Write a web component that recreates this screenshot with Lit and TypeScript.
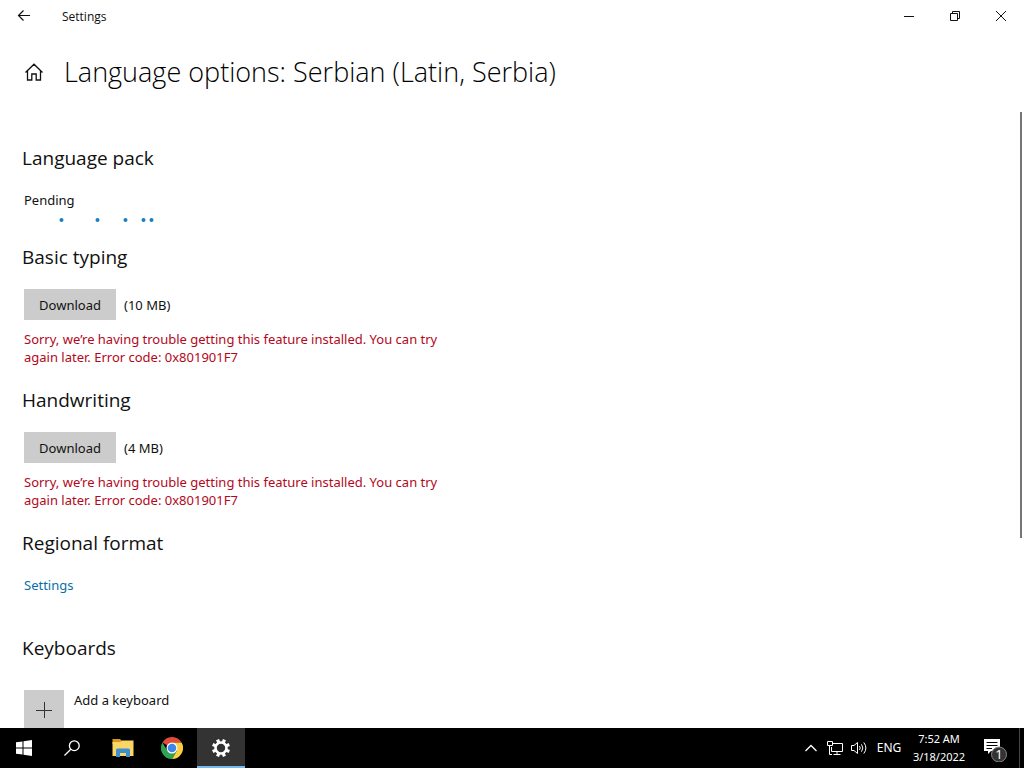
import { LitElement, html, css, svg } from "lit";
import { customElement, property } from "lit/decorators.js";

const PROGRESS_DOTS = [37, 73, 101, 119, 127];

@customElement("title-bar")
class TitleBar extends LitElement {
  static styles = css`
    :host { display: flex; align-items: center; height: 32px; flex: none; }
    button { display: grid; place-items: center; height: 32px; width: 46px; padding: 0; border: 0; background: none; color: #111; }
    .back { width: 48px; }
    .name { flex: 1; padding: 2px 0 0 14px; font: 12px/16px "Open Sans", sans-serif; }
    svg { display: block; fill: none; stroke: currentColor; }
  `;
  render() {
    return html`
      <button class="back" aria-label="Back">
        <svg width="16" height="16" viewBox="0 0 16 16" stroke-width="1.2"><path d="M14 7.500H2.500M7.500 2.500L2.500 7.500L7.500 12.500" /></svg>
      </button>
      <span class="name">Settings</span>
      <button aria-label="Minimize">
        <svg width="10" height="10" viewBox="0 0 10 10"><path d="M0 5.5H10" /></svg>
      </button>
      <button aria-label="Restore">
        <svg width="10" height="10" viewBox="0 0 10 10"><path d="M.5 2.5H7.5V9.5H.5ZM2.5 2.5V.5H9.5V7.5H7.5" /></svg>
      </button>
      <button aria-label="Close">
        <svg width="10" height="10" viewBox="0 0 10 10"><path d="M0 0L10 10M10 0L0 10" /></svg>
      </button>
    `;
  }
}

@customElement("feature-download")
class FeatureDownload extends LitElement {
  @property() name = "";
  @property() size = "";
  static styles = css`
    :host { display: block; }
    h2 { margin: 0 0 18px -2px; font: 400 19px/28px "Open Sans", sans-serif; }
    .row { display: flex; align-items: center; gap: 8px; }
    button { height: 31px; width: 92px; padding: 0; border: 0; background: #ccc; color: #111; font: inherit; }
    .error { margin: 10px 0 0; max-width: 430px; line-height: 18px; color: #b3081b; }
  `;
  render() {
    return html`
      <h2>${this.name}</h2>
      <div class="row"><button>Download</button><span>(${this.size})</span></div>
      <p class="error">Sorry, we’re having trouble getting this feature installed. You can try again later. Error code: 0x801901F7</p>
    `;
  }
}

@customElement("task-bar")
class TaskBar extends LitElement {
  static styles = css`
    :host { display: flex; height: 40px; flex: none; background: #000; color: #fff; font-size: 12px; }
    button { display: grid; place-items: center; height: 40px; padding: 0; border: 0; background: none; color: inherit; font: inherit; }
    .app { width: 48px; }
    .apps, .system, .pinned, .tray { display: flex; }
    .apps { flex: 1; gap: 3px; }
    .pinned { gap: 1px; }
    .active { background: #333; box-shadow: inset 0 -2px #76b9ed; }
    .icon { width: 24px; }
    .lang { width: 36px; }
    .clock { width: 64px; font-size: 11px; line-height: 18px; text-align: center; }
    .notes { width: 48px; }
    .desktop { width: 5px; border-left: 1px solid #444; }
    svg { display: block; }
    .count { font-size: 13px; }
  `;
  render() {
    return html`
      <div class="apps">
        <div class="system">
          <button class="app" aria-label="Start">
            <svg width="16" height="16" viewBox="0 0 16 16" fill="#fff"><path d="M0 2.3L6.5 1.4V7.5H0ZM7.5 1.2L16 0V7.5H7.5ZM0 8.5H6.5V14.6L0 13.7ZM7.5 8.5H16V16L7.5 14.8Z" /></svg>
          </button>
          <button class="app" aria-label="Search">
            <svg width="16" height="16" viewBox="0 0 16 16" fill="none" stroke="#fff" stroke-width="1.3"><circle cx="10.3" cy="5.7" r="4.9" /><path d="M6.8 9.2L.5 15.5" /></svg>
          </button>
        </div>
        <div class="pinned">
          <button class="app" aria-label="File Explorer">
            <svg width="22" height="18" viewBox="0 0 22 18">
              <path d="M.5 0H8L10 2H21V5H.5Z" fill="#d69b1d" />
              <path d="M.5 3H8.5L10 1.5H21.5V17H.5Z" fill="#fbd667" />
              <path d="M4 18V11Q4 9.5 5.500 9.500H16.500Q18 9.500 18 11V18H14V14H8V18Z" fill="#3c8fd0" />
            </svg>
          </button>
          <button class="app" aria-label="Chrome">
            <svg width="22" height="22" viewBox="0 0 22 22">
              <path d="M11 11L1.470 5.500A11 11 0 0 1 20.530 5.500H11Z" fill="#e24a3b" />
              <path d="M11 5.500H20.530A11 11 0 0 1 11 22L15.760 13.750Z" fill="#fbcf3f" />
              <path d="M1.470 5.500A11 11 0 0 0 11 22L15.760 13.750L6.240 13.750Z" fill="#2fa454" />
              <circle cx="11" cy="11" r="5.500" fill="#fff" /><circle cx="11" cy="11" r="4.300" fill="#4285e8" />
            </svg>
          </button>
          <button class="app active" aria-label="Settings">
            <svg width="18" height="18" viewBox="0 0 18 18" fill="none" stroke="#fff">
              <circle cx="9" cy="9" r="5.500" stroke-width="2.600" />
              ${[0, 45, 90, 135, 180, 225, 270, 315].map(
                (a) => svg`<path d="M9 0V3.500" stroke-width="3.200" transform="rotate(${a + 22.5} 9 9)" />`
              )}
            </svg>
          </button>
        </div>
      </div>
      <div class="tray">
        <button class="icon" aria-label="Show hidden icons">
          <svg width="12" height="8" viewBox="0 0 12 8" fill="none" stroke="#fff" stroke-width="1.300"><path d="M.5 7L6 1.500L11.500 7" /></svg>
        </button>
        <button class="icon" aria-label="Network">
          <svg width="16" height="14" viewBox="0 0 16 14" fill="none" stroke="#fff"><path d="M6 2.500H15.500V10.500H4.500V6M10 10.500V13M6.500 13.500H13.500M.5 .5H5.500V4.500H.5ZM2.500 4.500V13.500H5" /></svg>
        </button>
        <button class="icon" aria-label="Volume">
          <svg width="17" height="14" viewBox="0 0 17 14" fill="none" stroke="#fff"><path d="M.5 4.500H3L6.500 1.500V12.500L3 9.500H.5ZM8.500 5Q10 7 8.500 9M10.500 3.300Q13.200 7 10.500 10.700M12.800 1.500Q17 7 12.800 12.500" /></svg>
        </button>
        <button class="lang">ENG</button>
        <button class="clock"><span>7:52 AM<br />3/18/2022</span></button>
        <button class="notes" aria-label="Notifications">
          <svg width="26" height="28" viewBox="0 0 26 28">
            <path d="M2 5H18V17H9L6 20V17H2Z" fill="#fff" />
            <path d="M4.500 8.500H15.500M4.500 11.500H15.500M4.500 14.500H10" stroke="#000" />
            <circle cx="17" cy="20.500" r="7.500" fill="#333" stroke="#888" />
            <text class="count" x="17" y="25" text-anchor="middle" fill="#fff">1</text>
          </svg>
        </button>
        <button class="desktop" aria-label="Show desktop"></button>
      </div>
    `;
  }
}

@customElement("app-root")
class AppRoot extends LitElement {
  static styles = css`
    :host { display: flex; flex-direction: column; height: 100vh; overflow: hidden; background: #fff; color: #111; font: 13px/20px "Noto Sans", "Open Sans", sans-serif; }
    header { display: flex; align-items: center; gap: 20px; height: 80px; padding-left: 24px; flex: none; }
    h1 { margin: 0; color: #000; font: 300 27px/36px "Open Sans", sans-serif; }
    h2 { margin: 0 0 18px -2px; font: 400 19px/28px "Open Sans", sans-serif; }
    .view { display: flex; flex: 1; min-height: 0; }
    main { flex: 1; display: flex; flex-direction: column; gap: 20px; padding: 32px 24px 0; overflow: hidden; }
    main > * { flex: none; }
    p { margin: 0; }
    svg { display: block; }
    .home { padding: 0; border: 0; background: none; color: #111; }
    .dots { margin-top: 8px; fill: #1a7fc1; }
    .regional { margin-bottom: 19px; }
    a { color: #0a6fa8; text-decoration: none; }
    .add { display: flex; gap: 10px; margin-top: 28px; padding: 0; border: 0; background: none; color: inherit; font: inherit; }
    .plus { display: grid; place-items: center; width: 40px; height: 40px; background: #ccc; }
    .thumb { width: 2px; height: 69.2%; margin-right: 2px; background: #767676; }
  `;
  render() {
    return html`
      <title-bar></title-bar>
      <header>
        <button class="home" aria-label="Home">
          <svg width="20" height="20" viewBox="0 0 20 20" fill="none" stroke="currentColor" stroke-width="1.300">
            <path d="M1.500 10.500L10 2.200L18.500 10.500M3.500 9V18H7.800V12H12.200V18H16.500V9" />
          </svg>
        </button>
        <h1>Language options: Serbian (Latin, Serbia)</h1>
      </header>
      <div class="view">
        <main>
          <section>
            <h2>Language pack</h2>
            <p id="pending">Pending</p>
            <svg class="dots" role="progressbar" aria-labelledby="pending" width="132" height="5" viewBox="0 0 132 5">
              ${PROGRESS_DOTS.map((x) => svg`<circle cx=${x + 0.5} cy="2" r="2" />`)}
            </svg>
          </section>
          <feature-download name="Basic typing" size="10 MB"></feature-download>
          <feature-download name="Handwriting" size="4 MB"></feature-download>
          <section class="regional">
            <h2>Regional format</h2>
            <a href="#region">Settings</a>
          </section>
          <section>
            <h2>Keyboards</h2>
            <button class="add">
              <span class="plus">
                <svg width="16" height="16" viewBox="0 0 16 16" stroke="#333"><path d="M0 8.500H16M8.500 0V16" /></svg>
              </span>
              <span>Add a keyboard</span>
            </button>
          </section>
        </main>
        <div class="thumb"></div>
      </div>
      <task-bar></task-bar>
    `;
  }
}
